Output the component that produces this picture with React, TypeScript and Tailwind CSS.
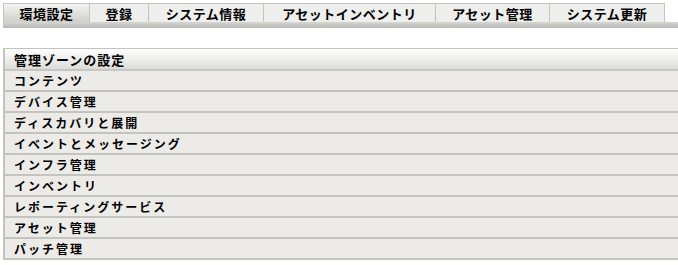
import React from "react";

const tabs = [
  { label: "環境設定", w: "w-[87px]", active: true },
  { label: "登録", w: "w-[59px]" },
  { label: "システム情報", w: "w-[115px]" },
  { label: "アセットインベントリ", w: "w-[172px]" },
  { label: "アセット管理", w: "w-[114px]" },
  { label: "システム更新", w: "w-[115px]" },
];

const rows = [
  "コンテンツ",
  "デバイス管理",
  "ディスカバリと展開",
  "イベントとメッセージング",
  "インフラ管理",
  "インベントリ",
  "レポーティングサービス",
  "アセット管理",
  "パッチ管理",
];

export default function App() {
  return (
    <div
      className="w-[678px] h-[265px] bg-white overflow-hidden pt-[3px]"
      style={{ fontFamily: '"Noto Sans CJK JP", "Noto Sans", sans-serif' }}
    >
      <div className="flex pl-[3px]">
        {tabs.map((t, i) => (
          <div
            key={i}
            className={`${t.w} h-[19px] flex items-center justify-center border-t border-r border-[#c4c4c2] ${
              i === 0 ? "border-l" : ""
            } ${
              t.active
                ? "bg-gradient-to-b from-[#f4f4f2] to-[#cfcfcb]"
                : "bg-[#eeeeec]"
            } text-[13px] font-bold text-black tracking-[0.5px] leading-none`}
          >
            {t.label}
          </div>
        ))}
      </div>
      <div className="ml-[3px] h-[6px] bg-gradient-to-b from-[#d6d6d2] to-[#b9b9b5]" />
      <div className="mt-[20px] ml-[3px] border-t border-l-2 border-[#c2c2bf]">
        <div className="h-[22px] flex items-center pl-[9px] bg-gradient-to-b from-[#ffffff] to-[#dcdcd9] border-b-2 border-[#c6c6c3] text-[13px] font-bold text-black tracking-[1px] leading-none">
          管理ゾーンの設定
        </div>
        {rows.map((r, i) => (
          <div
            key={i}
            className="h-[21px] flex items-center pl-[9px] bg-[#ecebe8] border-b-2 border-[#c3c3c0] text-[12px] font-bold text-black tracking-[2px] leading-none"
          >
            {r}
          </div>
        ))}
      </div>
    </div>
  );
}
